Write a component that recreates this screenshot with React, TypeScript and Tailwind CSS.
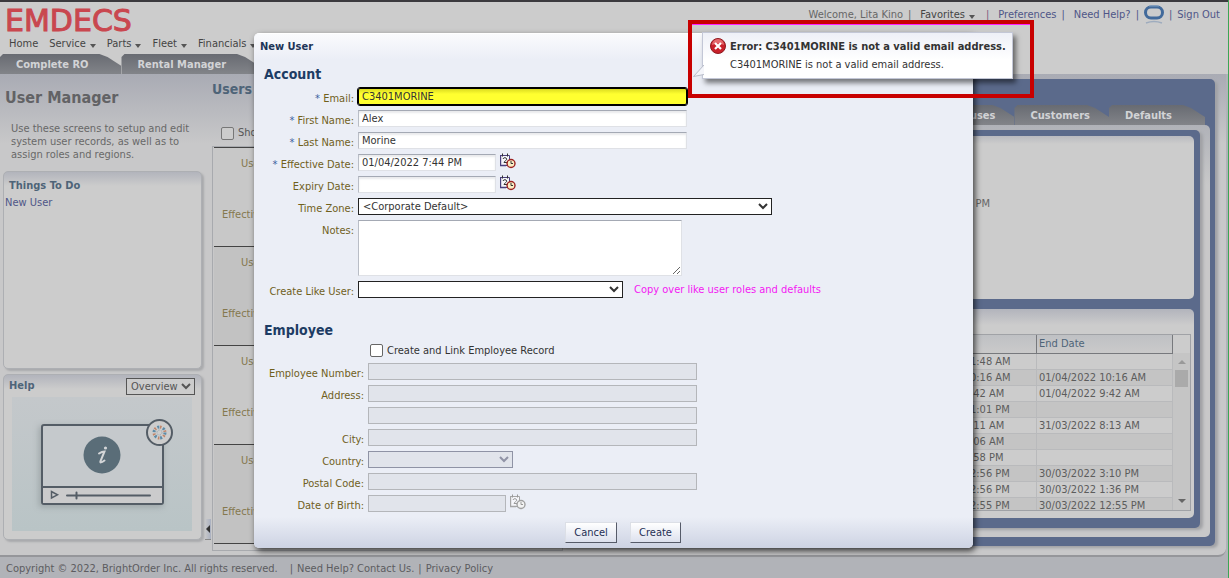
import type { ReactNode } from "react";

const navItems = [
  { label: "Home", menu: false },
  { label: "Service", menu: true },
  { label: "Parts", menu: true },
  { label: "Fleet", menu: true },
  { label: "Financials", menu: true },
];

const assignments = [
  { start: "01/04/2022 11:48 AM", end: "" },
  { start: "01/04/2022 10:16 AM", end: "01/04/2022 10:16 AM" },
  { start: "01/04/2022 9:42 AM", end: "01/04/2022 9:42 AM" },
  { start: "31/03/2022 11:01 PM", end: "" },
  { start: "31/03/2022 8:11 AM", end: "31/03/2022 8:13 AM" },
  { start: "31/03/2022 8:06 AM", end: "" },
  { start: "30/03/2022 3:58 PM", end: "" },
  { start: "30/03/2022 12:56 PM", end: "30/03/2022 3:10 PM" },
  { start: "30/03/2022 12:56 PM", end: "30/03/2022 1:36 PM" },
  { start: "30/03/2022 12:55 PM", end: "30/03/2022 12:55 PM" },
];

const inputClass =
  "h-[17px] border border-[#dfe1e6] border-t-[#a4a9b4] border-l-[#b9bdc6] bg-white px-[3px] text-[#333] shadow-[inset_0_2px_2px_#e9eaed]";
const disabledClass = "h-[17px] border border-[#b4b6ba] bg-[#e1e4eb] px-[3px]";

function Caret() {
  return (
    <svg viewBox="0 0 6 4" className="mt-1 ml-1 h-1 w-1.5 shrink-0" aria-hidden="true">
      <path d="M0 0h6L3 4z" fill="#555" />
    </svg>
  );
}

function Tab({ children, tight = false }: { children: ReactNode; tight?: boolean }) {
  return (
    <button
      className={`h-5 bg-linear-to-b from-[#686b72] to-[#828489] pt-px pl-4 font-bold text-[#d2d3d6] [clip-path:polygon(0_3px,3px_0,calc(100%-22px)_0,calc(100%-14px)_3px,100%_12px,100%_100%,0_100%)] ${tight ? "pr-[19px]" : "pr-[33px]"}`}
    >
      {children}
    </button>
  );
}

function CalendarIcon({ muted = false }: { muted?: boolean }) {
  const ink = muted ? "#a5a5a5" : "#4a3f7c";
  const ring = muted ? "#a0a0a0" : "#9c2323";
  const face = muted ? "#f3f3f3" : "#fbeec4";
  const dark = muted ? "#999" : "#333";
  return (
    <svg viewBox="0 0 16 16" className="size-4" aria-hidden="true">
      <path d="M.5 2.500h9v10h-9z" fill="#f6f6fa" stroke={ink} />
      <path d="M0 12.500h6M.5 2v11" stroke={ink} strokeWidth="1.400" />
      <path d="M2.500.5v3M7.500.5v3" stroke={dark} />
      <path d="M3 6c.3-1.800 3.700-1.800 3.700.2 0 1.300-2 1.300-2.700 3.300h3" fill="none" stroke={dark} />
      <circle cx="11" cy="10.500" r="4" fill={face} stroke={ring} strokeWidth="1.400" />
      <path d="M11 8v2.500h2" fill="none" stroke={dark} />
    </svg>
  );
}

function Field({
  id,
  label,
  required = false,
  wide = false,
  children,
}: {
  id: string;
  label: string;
  required?: boolean;
  wide?: boolean;
  children: ReactNode;
}) {
  return (
    <div className="flex gap-1 pb-[5px]">
      <label
        htmlFor={id}
        className={`-mb-[5px] shrink-0 text-right leading-[21px] whitespace-nowrap text-[#70601c] ${wide ? "w-[110px]" : "w-[100px]"}`}
      >
        {required && <span className="text-[#3c5fa0]">* </span>}
        {label}
      </label>
      {children}
    </div>
  );
}

function Header() {
  return (
    <header className="border-t-2 border-[#3b3a3e] bg-[#ccc]">
      <div className="flex h-[52px] justify-between">
        <div className="flex flex-col">
          <div className="h-[31px] pt-[3px] pl-[5px] font-['DejaVu_Sans'] text-[30px] leading-[31px] text-[#c9474f] [-webkit-text-stroke:1px_#c9474f]">
            EMDECS
          </div>
          <nav className="flex gap-[11px] pt-[3px] pl-[9px] text-[#444]">
            {navItems.map((item) => (
              <button key={item.label} className="flex items-center">
                {item.label}
                {item.menu && <Caret />}
              </button>
            ))}
          </nav>
        </div>
        <div className="flex h-[25px] items-center gap-[5px] pr-2 text-[#4f5688]">
          <span className="text-[#666]">Welcome, Lita Kino</span>
          <span className="text-[#666]">|</span>
          <button className="mr-[6px] ml-1 flex items-center text-[#444]">
            Favorites
            <Caret />
          </button>
          <span className="text-[#7d5a80]">|</span>
          <a href="#preferences" className="ml-1">Preferences</a>
          <span>|</span>
          <a href="#help" className="ml-1">Need Help?</a>
          <span>|</span>
          <svg viewBox="0 0 20 20" className="mb-[2px] size-5" aria-hidden="true">
            <rect x="1.500" y="3" width="17" height="11" rx="5.500" fill="none" stroke="#426a9b" strokeWidth="3" />
            <path d="M5 2h10" stroke="#7d9ec2" />
            <path d="M2 19q8-3 16 0" fill="none" stroke="#9eacbe" strokeWidth="1.500" />
          </svg>
          <span>|</span>
          <a href="#signout">Sign Out</a>
        </div>
      </div>
      <div className="flex">
        <Tab>Complete RO</Tab>
        <Tab>Rental Manager</Tab>
      </div>
    </header>
  );
}

function HelpPicture() {
  return (
    <svg viewBox="0 0 180 134" className="ml-2 block w-[180px]" role="img" aria-label="Overview video">
      <defs>
        <linearGradient id="sky" x1="0" y1="0" x2="0" y2="1">
          <stop offset="0" stopColor="#c4c8cb" />
          <stop offset="1" stopColor="#b9c4c6" />
        </linearGradient>
        <filter id="soft" x="-20%" y="-20%" width="140%" height="140%">
          <feGaussianBlur stdDeviation="3" />
        </filter>
      </defs>
      <rect width="180" height="134" fill="url(#sky)" />
      <rect x="27" y="29" width="124" height="81" fill="#8e9699" opacity=".7" filter="url(#soft)" />
      <rect x="30" y="28" width="121" height="79" rx="2" fill="#c5c9cc" stroke="#545d66" strokeWidth="2" />
      <path d="M31 91h119v15H31z" fill="#cbcbcc" />
      <path d="M30 90h121" stroke="#545d66" strokeWidth="2" />
      <path d="M39.500 94.500v6.500l6-3.200z" fill="none" stroke="#545d66" strokeWidth="1.500" />
      <path d="M55 98.500h83M64.500 95.500v6" stroke="#545d66" strokeWidth="2" strokeLinecap="round" />
      <circle cx="90" cy="58" r="18.500" fill="#5a6d78" />
      <circle cx="93.500" cy="51" r="1.600" fill="#d4d6d8" />
      <path d="M87 56.500q3-2 5.500-2l-4 9.500q-1 3 4-.5" fill="none" stroke="#d4d6d8" strokeWidth="2" strokeLinecap="round" />
      <circle cx="147.500" cy="35.500" r="12.500" fill="#cdcdcd" stroke="#545d66" strokeWidth="2" />
      <circle cx="147.500" cy="35.500" r="5.500" fill="none" stroke="#5c8ba8" strokeWidth="3" strokeDasharray="2 3.760" />
      <circle cx="147.500" cy="35.500" r="5.500" fill="none" stroke="#c08468" strokeWidth="3" strokeDasharray="1.500 4.260" strokeDashoffset="3" />
      <circle cx="147.500" cy="35.500" r="2.500" fill="none" stroke="#8494a0" strokeDasharray="1 1.600" />
    </svg>
  );
}

const cardClass =
  "rounded-[5px] border border-[#adafb3] bg-[#ccc] bg-linear-to-b from-[#b2b4bc] to-[#ccc] to-[14px] shadow-[2px_2px_2px_#a9aaad]";

function Sidebar() {
  return (
    <aside className="w-[205px] shrink-0">
      <h1 className="flex h-12 items-center pl-[5px] text-base font-bold text-[#626265]">User Manager</h1>
      <p className="w-[200px] pb-[10px] pl-[11px] leading-[13px] text-[#686868]">
        Use these screens to setup and edit system user records, as well as to assign roles and regions.
      </p>
      <section className={`ml-[3px] h-[198px] w-[199px] ${cardClass}`}>
        <h2 className="pt-[6px] pl-[5px] leading-4 font-bold text-[#4e6478]">Things To Do</h2>
        <a href="#new-user" className="block pl-px leading-[18px] text-[#4f5688]">New User</a>
      </section>
      <section className={`mt-[5px] ml-[3px] h-[166px] w-[199px] ${cardClass}`}>
        <div className="flex h-[22px] items-center justify-between pr-[6px] pl-[5px]">
          <h2 className="font-bold text-[#4e6478]">Help</h2>
          <select aria-label="Help topic" className="h-[17px] w-[69px] border border-[#555] bg-[#ccc] text-[#555]">
            <option>Overview</option>
          </select>
        </div>
        <HelpPicture />
      </section>
    </aside>
  );
}

function UserList() {
  return (
    <section className="w-[352px] shrink-0 pl-px">
      <h2 className="pt-[5px] text-sm leading-5 font-bold text-[#4e6478]">Users</h2>
      <label className="mt-[25px] flex h-[18px] items-center gap-1 pl-[9px] text-[#555]">
        <input type="checkbox" className="size-[13px] appearance-none rounded-[2px] border border-[#777] bg-[#ccc]" />
        Show All
      </label>
      <div className="mt-1 h-[405px] border border-[#a8aaae] pl-px">
        {["a", "b", "c", "d"].map((key, index) => (
          <div
            key={key}
            className={`h-[99px] border-t border-[#444] text-[#85784e] ${index % 2 ? "bg-[#c2c2c2]" : "bg-[#c8c8c8]"}`}
          >
            <p className="pt-2 pl-[27px] leading-4">User</p>
            <p className="pt-[35px] pl-2 leading-4">Effective Date</p>
          </div>
        ))}
        <div className="border-t border-[#444]" />
      </div>
    </section>
  );
}

function Details() {
  return (
    <section className="mt-[5px] mr-[11px] mb-[9px] flex flex-1 flex-col rounded-r-[5px] bg-[#5b6a8b] pt-[26px] pr-[5px] pb-[9px] shadow-[3px_2px_3px_#a0a1a5]">
      <div className="flex justify-end pr-[5px]">
        <Tab tight>Warehouses</Tab>
        <Tab tight>Customers</Tab>
        <Tab>Defaults</Tab>
      </div>
      <div className="flex flex-1 flex-col rounded-r-[5px] bg-linear-to-b from-[#b0b2b8] to-[#c8c8c9] to-[60px] pt-[5px] pr-[10px] pb-[9px]">
        <div className="flex flex-1 flex-col gap-[10px] rounded-r-[5px] bg-[#5b6a8b] px-[6px] pt-[6px] pb-[10px] shadow-[3px_2px_3px_#a0a1a5]">
          <div className="h-[163px] rounded-[5px] bg-[#ccc] bg-linear-to-b from-[#b9bac0] to-[#ccc] to-[8px] pt-[60px] pr-[204px] text-right leading-4 text-[#666]">
            01/04/2022 7:44 PM
          </div>
          <div className="flex-1 rounded-[5px] bg-[#ccc] bg-linear-to-b from-[#b2b4bc] to-[#ccc] to-[16px] pt-[25px] pr-[3px]">
            <div className="flex h-[177px] justify-end overflow-hidden border border-[#a0a2a6]">
              <table className="w-[540px] table-fixed border-collapse self-start text-left text-[#5c5c5c]">
                <thead>
                  <tr className="h-[18px] bg-linear-to-b from-[#bfc1c4] to-[#cacaca] text-[#4e6478]">
                    <th className="border-b border-[#77797d] p-0" />
                    <th className="w-[135px] border-r border-b border-[#77797d] px-[2px] py-0 font-normal">Start Date</th>
                    <th className="w-[136px] border-r border-b border-[#77797d] px-[2px] py-0 font-normal">End Date</th>
                  </tr>
                </thead>
                <tbody>
                  {assignments.map((row, index) => (
                    <tr key={index} className="h-4 leading-[15px] odd:bg-[#ccc] even:bg-[#c4c4c4]">
                      <td className="border-b border-[#b9babc] p-0" />
                      <td className="border-r border-b border-[#b9babc] px-[2px] py-0">{row.start}</td>
                      <td className="border-r border-b border-[#b9babc] px-[2px] py-0">{row.end}</td>
                    </tr>
                  ))}
                </tbody>
              </table>
              <div className="mt-[18px] flex w-[17px] shrink-0 flex-col items-center bg-[#c5c5c5] pt-[7px] pb-[7px]">
                <svg viewBox="0 0 8 4" className="h-1 w-2" aria-hidden="true">
                  <path d="M0 4h8L4 0z" fill="#999" />
                </svg>
                <div className="mt-[6px] h-[17px] w-[13px] bg-[#aaa]" />
                <svg viewBox="0 0 8 4" className="mt-auto h-1 w-2" aria-hidden="true">
                  <path d="M0 0h8L4 4z" fill="#666" />
                </svg>
              </div>
            </div>
          </div>
        </div>
      </div>
    </section>
  );
}

function ErrorNote() {
  return (
    <div className="absolute top-[-14px] left-[434px] border-4 border-[#c80000]" role="alert">
      <div className="border-t border-[#ff20ff] pt-[7px] pr-[17px] pb-[15px] pl-[10px]">
        <div className="relative flex gap-1 border border-[#c3c7d6] bg-linear-to-b from-[#eef0f7] to-white to-60% pt-[5px] pr-[6px] pb-1 pl-[7px] whitespace-nowrap text-[#333] shadow-[3px_4px_5px_rgba(0,0,0,0.5)]">
          <svg viewBox="0 0 11 13" className="absolute bottom-0 left-[-10px] h-[13px] w-[11px]" aria-hidden="true">
            <path d="M11 0 .5 11.500 11 9.500" fill="#f4f5fa" stroke="#b9bdc9" />
          </svg>
          <svg viewBox="0 0 16 16" className="size-4 shrink-0" aria-hidden="true">
            <circle cx="8" cy="8" r="7.500" fill="#c8202a" stroke="#8e1a20" />
            <path d="M2 7a6 6 0 0 1 12 0q-6-3-12 0z" fill="#e4686c" />
            <path d="m5 5 6 6M11 5l-6 6" stroke="#fff" strokeWidth="2.200" />
          </svg>
          <div>
            <p className="leading-[18px] font-bold">Error: C3401MORINE is not a valid email address.</p>
            <p className="leading-[18px]">C3401MORINE is not a valid email address.</p>
          </div>
        </div>
      </div>
    </div>
  );
}

function NewUserDialog() {
  return (
    <form
      role="dialog"
      aria-label="New User"
      className="relative w-[719px] rounded-[5px] border-t border-white bg-[#ebeef6] shadow-[2px_3px_6px_rgba(0,0,0,0.7)]"
    >
      <div className="rounded-t-[5px] bg-linear-to-b from-[#fafbfd] to-[#ebeef6] pl-[6px] leading-[26px] font-bold text-[#1d3557]">
        New User
      </div>
      <h2 className="pl-[10px] text-sm leading-7 font-bold text-[#1d3c64]">Account</h2>
      <Field id="email" label="Email:" required>
        <input
          id="email"
          defaultValue="C3401MORINE"
          className="h-[17px] w-[329px] rounded-[2px] border border-black bg-linear-to-b from-[#dcdc20] to-[#ffff30] to-[5px] px-[3px] text-[#333] outline-1 outline-black"
        />
      </Field>
      <Field id="first" label="First Name:" required>
        <input id="first" defaultValue="Alex" className={`w-[329px] ${inputClass}`} />
      </Field>
      <Field id="last" label="Last Name:" required>
        <input id="last" defaultValue="Morine" className={`w-[329px] ${inputClass}`} />
      </Field>
      <Field id="effective" label="Effective Date:" required>
        <input id="effective" defaultValue="01/04/2022 7:44 PM" className={`w-[138px] ${inputClass}`} />
        <button type="button" aria-label="Pick effective date" className="-mt-px h-4">
          <CalendarIcon />
        </button>
      </Field>
      <Field id="expiry" label="Expiry Date:">
        <input id="expiry" className={`w-[138px] ${inputClass}`} />
        <button type="button" aria-label="Pick expiry date" className="-mt-px h-4">
          <CalendarIcon />
        </button>
      </Field>
      <Field id="zone" label="Time Zone:">
        <select id="zone" className="h-[17px] w-[414px] border border-[#222] bg-white text-[#333]">
          <option>&lt;Corporate Default&gt;</option>
        </select>
      </Field>
      <Field id="notes" label="Notes:">
        <textarea
          id="notes"
          className="h-14 w-[324px] border border-[#dfe1e6] border-t-[#a4a9b4] border-l-[#b9bdc6] bg-white px-[3px]"
        />
      </Field>
      <Field id="like" label="Create Like User:">
        <select id="like" className="h-[17px] w-[265px] border border-[#222] bg-white text-[#333]" />
        <span className="pl-[7px] leading-[18px] text-[#f318f3]">Copy over like user roles and defaults</span>
      </Field>

      <h2 className="pt-[13px] pl-[10px] text-sm leading-[26px] font-bold text-[#1d3c64]">Employee</h2>
      <label className="mb-[5px] ml-[116px] flex h-[15px] items-center gap-1 text-[#333]">
        <input type="checkbox" className="size-[13px] appearance-none rounded-[2px] border border-[#666] bg-white" />
        Create and Link Employee Record
      </label>
      <Field id="number" label="Employee Number:" wide>
        <input id="number" disabled className={`w-[329px] ${disabledClass}`} />
      </Field>
      <Field id="address" label="Address:" wide>
        <input id="address" disabled className={`w-[329px] ${disabledClass}`} />
      </Field>
      <div className="pb-[5px] pl-[114px]">
        <input aria-label="Address line 2" disabled className={`block w-[329px] ${disabledClass}`} />
      </div>
      <Field id="city" label="City:" wide>
        <input id="city" disabled className={`w-[329px] ${disabledClass}`} />
      </Field>
      <Field id="country" label="Country:" wide>
        <select id="country" disabled className="h-[17px] w-[145px] border border-[#8f93a5] bg-[#e1e4eb] text-[#9093a6]" />
      </Field>
      <Field id="postal" label="Postal Code:" wide>
        <input id="postal" disabled className={`w-[329px] ${disabledClass}`} />
      </Field>
      <Field id="birth" label="Date of Birth:" wide>
        <input id="birth" disabled className={`w-[138px] ${disabledClass}`} />
        <button type="button" disabled aria-label="Pick date of birth" className="-mt-px h-4">
          <CalendarIcon muted />
        </button>
      </Field>

      <div className="flex gap-[13px] rounded-b-[5px] bg-linear-to-b from-[#ebeef6] to-[#cdd3e3] pt-[5px] pb-[5px] pl-[311px] text-[#1f2f55]">
        <button type="button" className="h-[21px] w-[52px] border border-[#dcdfe6] border-r-[#565b69] border-b-[#565b69] bg-linear-to-b from-white to-[#dde1ee]">
          Cancel
        </button>
        <button type="button" className="h-[21px] w-[51px] border border-[#dcdfe6] border-r-[#565b69] border-b-[#565b69] bg-linear-to-b from-white to-[#dde1ee]">
          Create
        </button>
      </div>
      <ErrorNote />
    </form>
  );
}

export default function App() {
  return (
    <div className="relative flex min-h-screen flex-col border-r border-[#3aa655] bg-[#b1b3b8] font-['DejaVu_Sans_Condensed','DejaVu_Sans',sans-serif] text-[11px] leading-4">
      <Header />
      <main className="mr-[2px] flex flex-1 rounded-br-[8px] border-b-2 border-[#95969a] bg-linear-to-b from-[#a9abb4] to-[#c8c8c9] to-[70px]">
        <Sidebar />
        <div className="flex w-[6px] shrink-0 flex-col justify-end pb-[15px]">
          <button aria-label="Collapse sidebar" className="h-[21px] border-b border-[#888] bg-linear-to-r from-[#c8c8c9] to-[#a9b0c0]">
            <svg viewBox="0 0 4 8" className="mx-auto h-2 w-1" aria-hidden="true">
              <path d="M4 0v8L0 4z" fill="#333" />
            </svg>
          </button>
        </div>
        <UserList />
        <Details />
      </main>
      <footer className="flex h-[21px] items-center pt-[3px] pl-[6px] text-[#5c5c60]">
        <span>Copyright © 2022, BrightOrder Inc. All rights reserved.</span>
        <span className="pr-1 pl-3">|</span>
        <a href="#contact">Need Help? Contact Us.</a>
        <span className="px-1">|</span>
        <a href="#privacy">Privacy Policy</a>
      </footer>
      <div className="absolute inset-0 flex items-start justify-center pt-[33px] pr-px">
        <NewUserDialog />
      </div>
    </div>
  );
}
